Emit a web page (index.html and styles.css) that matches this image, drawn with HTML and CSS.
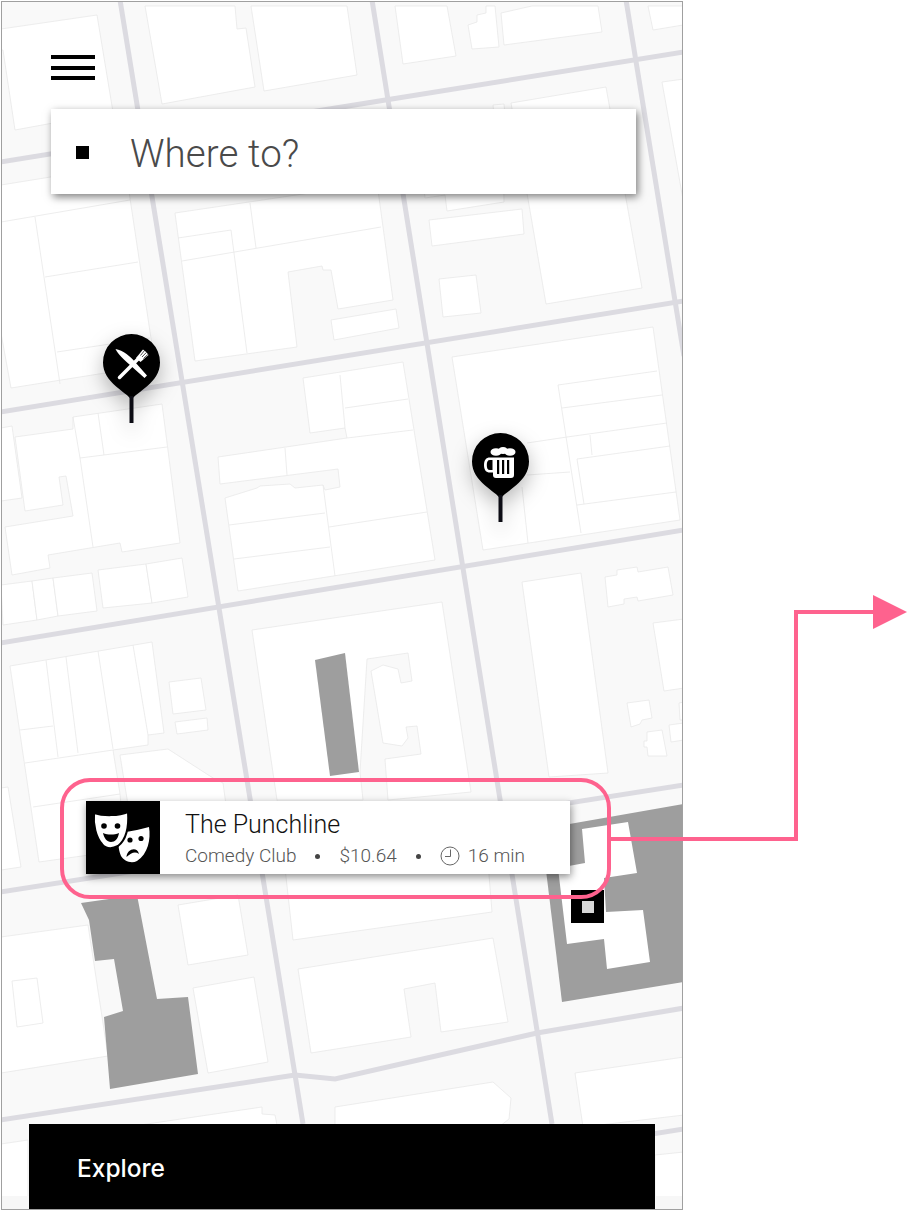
FILE: index.html
```html
<!DOCTYPE html>
<html lang="en">
<head>
    <meta charset="UTF-8">
    <title>Where to?</title>
    <link rel="stylesheet" href="styles.css">
</head>
<body>
    <div class="phone">
        <svg class="map" viewBox="2 2 680 1207" width="680" height="1207">
            <rect class="ground" x="0" y="0" width="690" height="1215"/>
            <g class="blocks">
                <polygon points="1,29 97,15 113,112 15,130 3,50 1,50"/>
                <polygon points="145,6 235,6 237,29 246,28 255,87 162,104"/>
                <polygon points="251,6 347,6 357,75 264,91"/>
                <polygon points="395,6 447,6 456,56 403,64"/>
                <polygon points="477,22 477,15 486,13 486,6 495,6 499,47 472,49 468,25"/>
                <polygon points="501,13 532,6 598,6 602,32 504,45"/>
                <polygon points="648,6 683,6 683,25 653,30"/>
                <polygon points="511,103 606,87 642,288 546,304 528,199"/>
                <polygon points="493,105 504,104 506,125 495,125"/>
                <polygon points="429,220 522,209 524,234 432,246"/>
                <polygon points="439,279 476,275 481,313 443,317"/>
                <polygon points="662,82 684,79 684,205"/>
                <polygon points="420,150 503,150 504,202 447,211 445,195 425,198"/>
                <polygon points="1,185 125,165 155,365 11,388 1,333"/>
                <polygon points="175,213 377,183 393,300 338,309 331,270 323,270 322,266 288,272 297,347 195,361"/>
                <polygon points="331,320 396,309 399,328 334,340"/>
                <polygon points="303,378 403,362 435,560 238,591 225,498 257,488 260,486 290,484 295,488 323,485 325,490 340,487 338,469 220,484 218,457 347,438 345,428 310,433"/>
                <polygon points="452,357 653,327 680,520 483,550"/>
                <polygon points="1,428 12,426 22,498 1,501"/>
                <polygon points="15,437 73,429 73,417 162,404 180,543 122,552 120,543 48,555 50,568 12,575 5,527 73,516 66,476 59,477 63,505 25,511"/>
                <polygon points="1,585 32,581 37,620 3,625"/>
                <polygon points="32,581 53,578 58,616 37,620"/>
                <polygon points="53,578 92,573 97,611 58,616"/>
                <polygon points="98,570 146,564 152,603 103,608"/>
                <polygon points="146,564 182,558 188,597 152,603"/>
                <polygon points="10,666 152,642 164,733 148,735 148,745 113,750 120,794 125,850 39,862"/>
                <polygon points="169,682 201,678 206,710 173,714"/>
                <polygon points="175,722 207,718 208,730 177,734"/>
                <polygon points="120,755 168,749 213,778 223,783 226,805 128,805"/>
                <polygon points="1,788 8,787 21,867 1,870"/>
                <polygon points="252,630 442,602 471,792 388,800 385,759 421,754 417,726 406,727 408,738 402,746 383,743 371,671 383,665 398,669 401,683 412,681 408,653 367,659 360,772 363,800 277,800"/>
                <polygon points="283,850 487,850 492,912 293,940"/>
                <polygon points="298,969 493,938 508,1022 441,1032 435,983 404,989 411,1037 311,1053"/>
                <polygon points="178,905 238,895 248,955 188,965"/>
                <polygon points="193,988 254,977 268,1062 208,1073"/>
                <polygon points="1,937 88,925 108,1056 1,1073"/>
                <polygon points="12,981 37,978 43,1023 17,1027"/>
                <polygon points="120,1128 262,1107 262,1114 275,1115 278,1130"/>
                <polygon points="1,1144 28,1140 28,1200 1,1200"/>
                <polygon points="335,1107 493,1082 511,1098 509,1119 495,1130 335,1130"/>
                <polygon points="575,1073 684,1057 684,1115 583,1127"/>
                <polygon points="655,1155 684,1152 684,1200 655,1200"/>
                <polygon points="522,582 581,573 608,773 549,777"/>
                <polygon points="605,577 617,575 617,570 637,567 638,572 668,567 673,595 638,601 637,597 624,599 624,604 608,607"/>
                <polygon points="653,623 684,619 684,688 664,691"/>
                <polygon points="627,703 649,700 652,718 642,720 640,724 631,727"/>
                <polygon points="647,732 662,730 667,756 648,756 647,747 644,747 644,741 647,741"/>
                <polygon points="669,725 684,723 684,740 671,742"/>
                <polygon points="679,703 684,702 684,720 680,720"/>
            </g>
            <g class="walls">
                <path d="M35 217L60 384M45 277L138 262M57 352L150 338M1 222L130 200"/>
                <path d="M250 203L256 248M178 238L231 230L247 353M182 261L381 227"/>
                <path d="M285 448L287 475M229 525L325 513M234 559L330 547M323 485L335 576"/>
                <path d="M345 408L408 399M347 438L413 430M329 527L427 512M340 375L345 428"/>
                <path d="M558 385L657 371M558 385L581 533M562 408L662 395M567 437L667 423M590 435L592 455M577 459L670 446M577 459L584 504M577 505L676 492M527 443L567 437M527 475L570 472M522 487L528 543"/>
                <path d="M73 417L80 458L93 547M98 413L104 455M80 458L167 447"/>
                <path d="M20 730L53 726M46 660L58 757M66 657L78 753M98 651L113 749M133 645L148 735M25 763L113 750M33 807L120 794"/>
                <path d="M277 800L283 850"/>
            </g>
            <g class="solid">
                <polygon points="315,660 345,653 359,772 330,776"/>
                <polygon points="81,903 137,895 157,999 188,997 198,1074 110,1089 104,1017 123,1011 114,959 95,961 89,920"/>
                <polygon points="541,829 684,804 684,982 562,1002"/>
            </g>
            <polygon class="court" points="582,829 628,822 637,873 604,878 606,912 643,910 650,962 607,969 604,939 567,944 558,868 585,863"/>
            <g class="roads">
                <path d="M120 0L303 1124"/>
                <path d="M372 0L552 1124"/>
                <path d="M626 0L684 356"/>
                <path d="M0 162L684 52"/>
                <path d="M0 412L684 301"/>
                <path d="M0 643L684 530"/>
                <path d="M0 892L684 785"/>
                <path d="M0 1120L295 1075L335 1079L537 1033L684 1008"/>
                <path d="M520 1155L684 1129"/>
            </g>
            <rect class="fade" x="0" y="1196" width="690" height="15"/>
            <rect class="venue" x="571" y="890" width="33" height="33"/>
            <rect class="venue-dot" x="582" y="901" width="12" height="12"/>
        </svg>

        <svg class="pin pin-food" viewBox="0 0 58 90" width="58" height="90">
            <path class="pin-head" d="M28.500 66C24 58 0 49 0 28.500A28.500 28.500 0 0 1 57 28.500C57 49 33 58 28.500 66Z"/>
            <rect class="pin-stem" x="26.500" y="62" width="4" height="27"/>
            <path class="glyph" d="M12.500 15C20 16 28 23 32 28L44 41.500L41.500 44L27 31C21 26 15 20 12.500 15Z"/>
            <path class="glyph-line" d="M16.500 43.500L35 25"/>
            <path class="glyph" d="M33 24L40 15.500L42.500 17.500L44 19L45.500 21L37.500 28Z"/>
            <path class="tine" d="M37.500 21.500L41.500 16.500M39 23L43.300 18.500M40.500 24.500L44.800 20.500"/>
        </svg>

        <svg class="pin pin-beer" viewBox="0 0 58 90" width="58" height="90">
            <path class="pin-head" d="M28.500 66C24 58 0 49 0 28.500A28.500 28.500 0 0 1 57 28.500C57 49 33 58 28.500 66Z"/>
            <rect class="pin-stem" x="26.500" y="62" width="4" height="27"/>
            <ellipse class="glyph" cx="24" cy="19" rx="5.500" ry="3.800"/>
            <ellipse class="glyph" cx="31" cy="17.500" rx="4.500" ry="3.500"/>
            <ellipse class="glyph" cx="38" cy="19" rx="5.500" ry="3.800"/>
            <path class="glyph" d="M20.500 24.500H42V42C42 44 41 45 39 45H24C22 45 21 44 21 42V39.500H18C14 39.500 12 37 12 32C12 27 14 24.500 18 24.500H20.500ZM20.500 27H18C15.500 27 14.800 29 14.800 32C14.800 35 15.500 37 18 37H20.500Z"/>
            <rect class="slot" x="25" y="27" width="2.200" height="14"/>
            <rect class="slot" x="30" y="27" width="2.200" height="14"/>
            <rect class="slot" x="35" y="27" width="2.200" height="14"/>
        </svg>

        <div class="menu-icon"><span></span><span></span><span></span></div>

        <div class="search">
            <span class="search-dot"></span>
            <span class="search-text">Where to?</span>
        </div>

        <div class="place-card">
            <div class="place-icon">
                <svg viewBox="0 0 74 73" width="74" height="73">
                    <path class="glyph" d="M33 32C40 31 53 29 63 26C65 38 62 53 51 60C45 63 38 60 35 55C32 48 32 40 33 32Z"/>
                    <circle class="slot" cx="44" cy="39" r="2.600"/>
                    <circle class="slot" cx="55" cy="37.500" r="2.600"/>
                    <path class="slot" d="M40.500 56C41 48 51 45 53 53C49 50 45 52 40.500 56Z"/>
                    <path class="glyph mask-front" d="M8 12C17 15 33 15 42 11C43 25 41 38 32 45C26 48 20 48 16 43C10 36 7 24 8 12Z"/>
                    <circle class="slot" cx="18" cy="25" r="2.800"/>
                    <circle class="slot" cx="31.500" cy="25" r="2.800"/>
                    <path class="slot" d="M17 32C22 34 28 34 33 32C32 38 29 41 25 41C21 41 18 37 17 32Z"/>
                </svg>
            </div>
            <div class="place-info">
                <div class="place-name">The Punchline</div>
                <div class="place-meta">
                    <span>Comedy Club</span>
                    <span class="dot"></span>
                    <span>$10.64</span>
                    <span class="dot"></span>
                    <svg class="clock" viewBox="0 0 20 20" width="20" height="20">
                        <circle cx="10" cy="10" r="9"/>
                        <path d="M10.500 3.500V10.500H5"/>
                    </svg>
                    <span>16 min</span>
                </div>
            </div>
        </div>

        <div class="explore-bar">Explore</div>
    </div>

    <div class="callout"></div>
    <svg class="connector" viewBox="0 0 300 250" width="300" height="250">
        <path class="connector-line" d="M2 246H187V19H266"/>
        <polygon class="connector-head" points="264,2 298,19 264,36"/>
    </svg>
</body>
</html>
```

FILE: styles.css
```css
html, body {
    margin: 0;
    padding: 0;
    background: #fff;
}
body {
    width: 907px;
    height: 1211px;
    position: relative;
    overflow: hidden;
    font-family: Roboto, "Liberation Sans", sans-serif;
}

.phone {
    position: relative;
    box-sizing: border-box;
    width: 682px;
    height: 1209px;
    margin: 1px 0 0 1px;
    border: 1px solid #a0a0a0;
    display: flex;
    flex-direction: column;
    overflow: hidden;
}

.map {
    position: absolute;
    left: 0;
    top: 0;
}
.ground { fill: #f9f9f9; }
.blocks polygon { fill: #fff; stroke: #e8e8e8; stroke-width: 0.8; }
.walls path { fill: none; stroke: #e8e8e8; stroke-width: 0.8; }
.solid polygon { fill: #9e9e9e; }
.court { fill: #fff; }
.roads path { fill: none; stroke: #dcdbe1; stroke-width: 5; }
.fade { fill: #f7f7f7; }
.venue { fill: #000; }
.venue-dot { fill: #d8d8d8; }

.pin {
    position: absolute;
    filter: drop-shadow(0 8px 10px rgba(0, 0, 0, 0.28));
}
.pin-food { left: 101px; top: 332px; }
.pin-beer { left: 470px; top: 431px; }
.pin-head { fill: #000; }
.pin-stem { fill: #0c0c14; }
.glyph { fill: #fff; }
.glyph-line { fill: none; stroke: #fff; stroke-width: 3.5; stroke-linecap: round; }
.tine { fill: none; stroke: #000; stroke-width: 0.7; }
.slot { fill: #000; }
.mask-front { stroke: #000; stroke-width: 2; }

.menu-icon {
    position: relative;
    margin: 53px 0 0 49px;
    width: 44px;
    display: flex;
    flex-direction: column;
    gap: 6.5px;
}
.menu-icon span {
    display: block;
    height: 4px;
    background: #000;
}

.search {
    position: relative;
    box-sizing: border-box;
    width: 585px;
    height: 85px;
    margin: 29px 0 0 49px;
    padding-left: 25px;
    background: #fff;
    box-shadow: 2px 3px 8px rgba(0, 0, 0, 0.5);
    display: flex;
    align-items: center;
}
.search-dot {
    width: 13px;
    height: 13px;
    margin-top: 2px;
    background: #000;
}
.search-text {
    margin: 4px 0 0 41px;
    font-size: 38.5px;
    font-weight: 300;
    letter-spacing: 0.1px;
    color: #4a4a4a;
}

.place-card {
    position: relative;
    width: 484px;
    height: 73px;
    margin: 607px 0 0 84px;
    background: #fff;
    box-shadow: 1px 3px 8px rgba(0, 0, 0, 0.45);
    display: flex;
}
.place-icon {
    width: 74px;
    height: 73px;
    background: #000;
}
.place-icon svg { display: block; }
.place-info {
    padding: 8px 0 0 25px;
}
.place-name {
    font-size: 25px;
    font-weight: 300;
    line-height: 32px;
    color: #111;
}
.place-meta {
    display: flex;
    align-items: center;
    margin-top: 3px;
    font-size: 19px;
    font-weight: 300;
    line-height: 24px;
    color: #555;
}
.dot {
    width: 5px;
    height: 5px;
    margin: 0 19px;
    border-radius: 50%;
    background: #444;
}
.clock {
    margin-right: 8px;
}
.clock circle, .clock path {
    fill: none;
    stroke: #555;
    stroke-width: 0.9;
}

.explore-bar {
    position: relative;
    box-sizing: border-box;
    width: 626px;
    height: 85px;
    margin: auto 0 0 27px;
    padding: 3px 0 0 48px;
    background: #000;
    color: #fff;
    font-family: Inter, "Liberation Sans", sans-serif;
    font-size: 24.5px;
    font-weight: 500;
    display: flex;
    align-items: center;
}

.callout {
    position: absolute;
    left: 60px;
    top: 778px;
    box-sizing: border-box;
    width: 551px;
    height: 121px;
    border: 4px solid #fe628e;
    border-radius: 30px;
}
.connector {
    position: absolute;
    left: 609px;
    top: 593px;
}
.connector-line {
    fill: none;
    stroke: #fe628e;
    stroke-width: 4;
}
.connector-head { fill: #fe628e; }
```
